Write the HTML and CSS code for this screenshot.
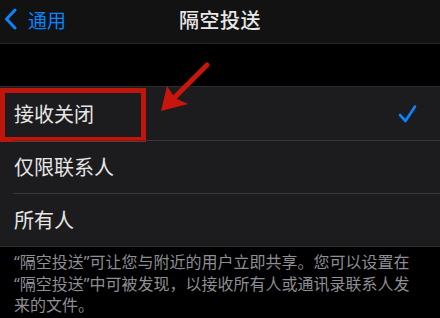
FILE: index.html
```html
<!DOCTYPE html>
<html lang="zh-CN">
<head>
  <meta charset="UTF-8">
  <meta name="viewport" content="width=device-width, initial-scale=1.0">
  <title>隔空投送</title>
  <link rel="stylesheet" href="styles.css">
</head>
<body>
  <div class="nav">
    <div class="back">
      <svg class="chevron" width="14" height="22" viewBox="0 0 14 22">
        <polyline points="11,2 2.5,11 11,20" fill="none" stroke="#0a84ff" stroke-width="3" stroke-linecap="round" stroke-linejoin="round"/>
      </svg>
      <span>通用</span>
    </div>
    <div class="title">隔空投送</div>
    <div></div>
  </div>

  <div class="group">
    <div class="row selected">
      <span>接收关闭</span>
      <svg class="check" width="20" height="20" viewBox="0 0 20 20">
        <polyline points="2,11 7.5,17 17,2.5" fill="none" stroke="#0a84ff" stroke-width="2.6" stroke-linecap="round" stroke-linejoin="round"/>
      </svg>
      <div class="mark-box"></div>
    </div>
    <div class="row"><span>仅限联系人</span></div>
    <div class="row"><span>所有人</span></div>
  </div>

  <p class="footer">“隔空投送”可让您与附近的用户立即共享。您可以设置在“隔空投送”中可被发现，以接收所有人或通讯录联系人发来的文件。</p>

  <svg class="arrow" width="70" height="70" viewBox="155 58 70 70">
    <line x1="207" y1="65" x2="174" y2="98" stroke="#c8160c" stroke-width="5" stroke-linecap="round"/>
    <polygon points="161,111 167,86 175,98 188,104" fill="#c8160c"/>
  </svg>
</body>
</html>
```

FILE: styles.css
```css
*{
  box-sizing: border-box;
  font-family: "Noto Sans CJK SC", "Noto Sans", sans-serif;
}
body{
  margin: 0;
  background: #000;
  position: relative;
  width: 440px;
  height: 318px;
  overflow: hidden;
}
.nav{
  height: 44px;
  background: #121212;
  border-bottom: 1px solid #262628;
  display: grid;
  grid-template-columns: 1fr auto 1fr;
  align-items: center;
  padding-bottom: 5px;
}
.back{
  display: flex;
  align-items: center;
  color: #0a84ff;
  font-size: 19px;
  padding-left: 4px;
}
.chevron{
  margin-right: 10px;
}
.title{
  color: #e8e8e8;
  font-size: 20px;
  font-weight: 500;
  letter-spacing: 0.5px;
}
.group{
  margin-top: 42px;
  background: #1c1c1e;
  border-top: 1px solid #2c2c2e;
  border-bottom: 1px solid #2c2c2e;
}
.row{
  position: relative;
  height: 53px;
  display: flex;
  align-items: center;
  justify-content: space-between;
  padding: 0 22px 0 14px;
  color: #e6e6e6;
  font-size: 20px;
}
.row + .row::before{
  content: "";
  position: absolute;
  top: 0;
  left: 13px;
  right: 0;
  border-top: 1px solid #38383a;
}
.mark-box{
  position: absolute;
  left: 0;
  top: 1px;
  width: 146px;
  height: 54px;
  border: 5px solid #c0150a;
}
.footer{
  margin: 0;
  padding: 5px 26px 0 14px;
  color: #8e8e93;
  font-family: "Noto Sans", "Noto Sans CJK SC", sans-serif;
  font-size: 16px;
  line-height: 21.5px;
}
.arrow{
  position: absolute;
  left: 155px;
  top: 58px;
}
```
